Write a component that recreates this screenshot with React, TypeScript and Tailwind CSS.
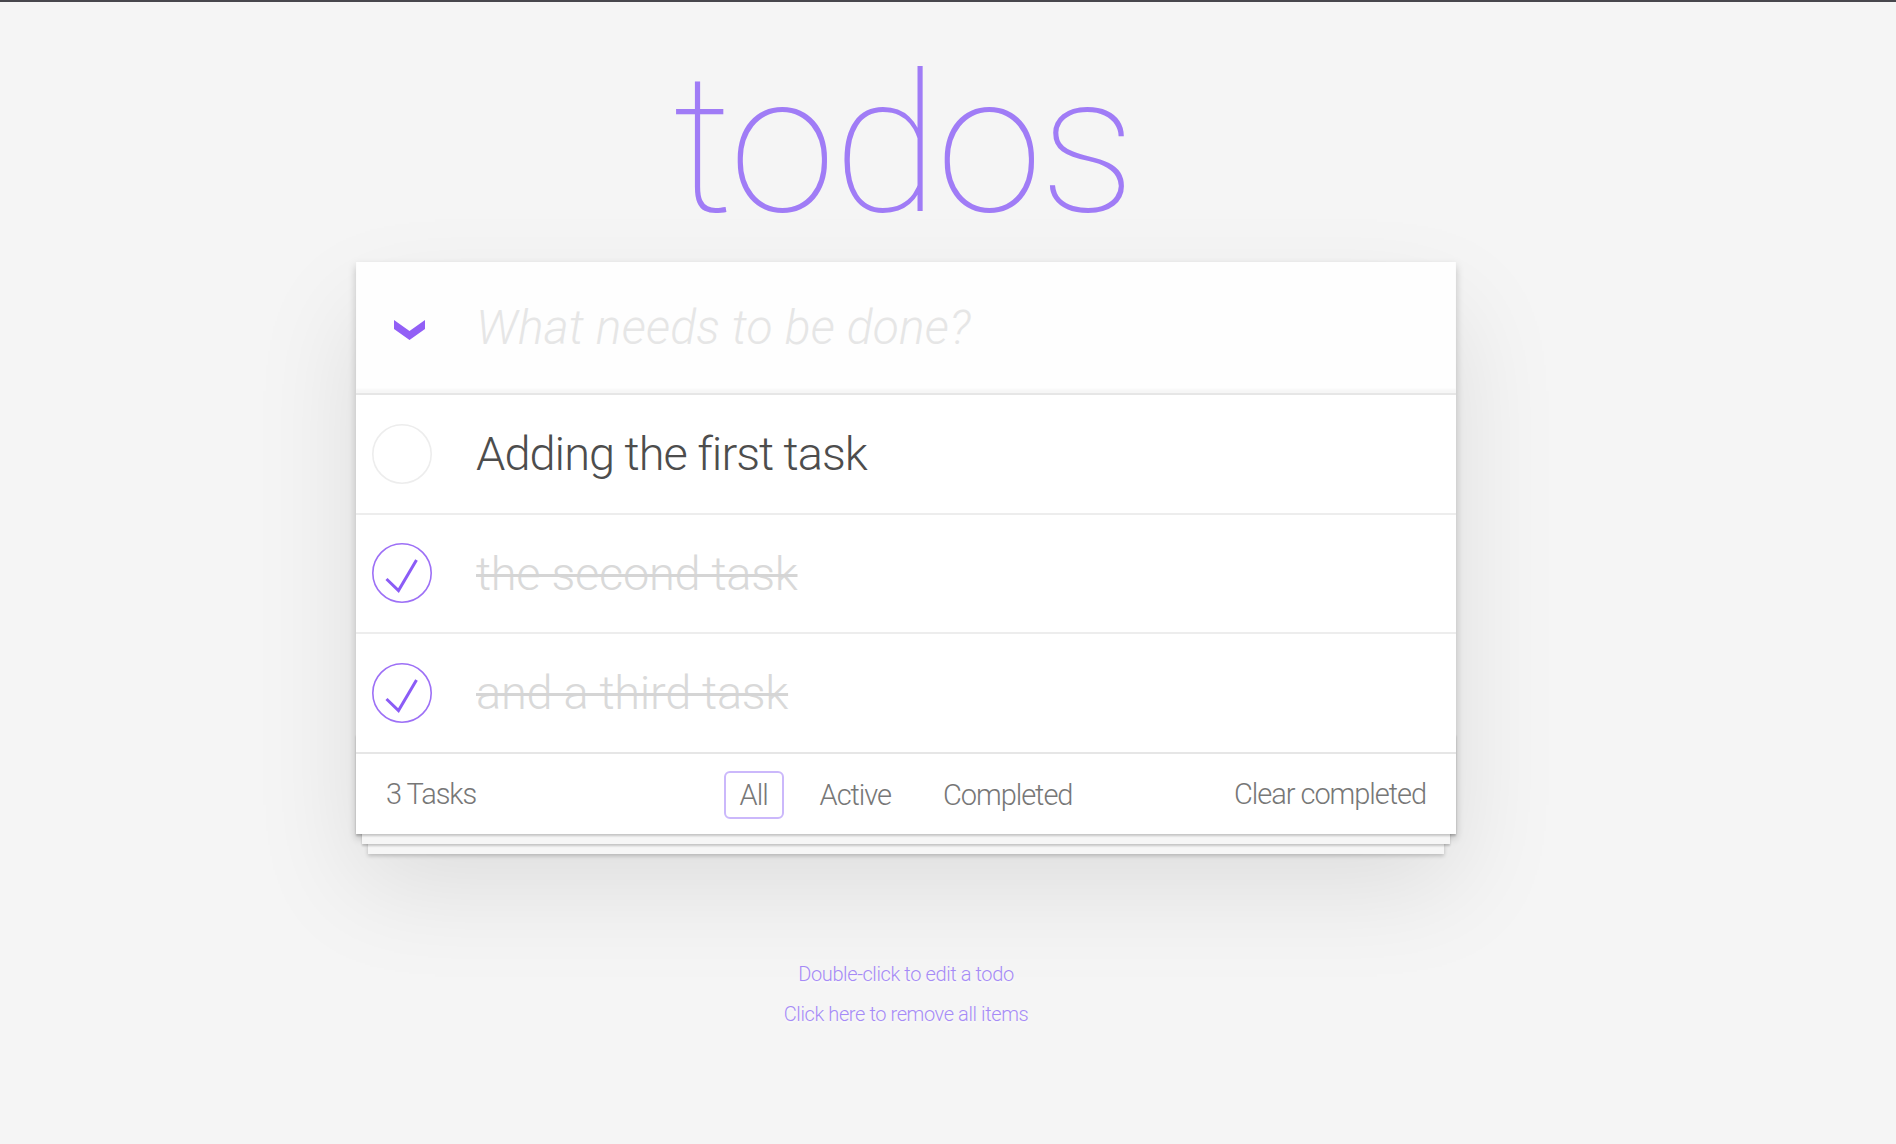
import React from "react";

const FONT = { fontFamily: "Roboto, 'Helvetica Neue', Arial, sans-serif" };

function Chevron() {
  return (
    <svg width="31" height="20" viewBox="0 0 31 20" className="block">
      <polygon points="0,0 15.5,11 31,0 31,9 15.5,20 0,9" fill="#925ff6" />
    </svg>
  );
}

function Toggle({ checked }: { checked: boolean }) {
  return (
    <svg width="60" height="60" viewBox="0 0 60 60" className="block shrink-0">
      <circle
        cx="30"
        cy="30"
        r="29.2"
        fill="none"
        stroke={checked ? "#9d70f6" : "#ededed"}
        strokeWidth="1.6"
      />
      {checked && (
        <polyline
          points="14.5,36 26.5,47.5 44.5,17"
          fill="none"
          stroke="#8b5cf6"
          strokeWidth="3"
          strokeLinejoin="miter"
        />
      )}
    </svg>
  );
}

function Row({ text, done, last }: { text: string; done: boolean; last?: boolean }) {
  return (
    <li className={`flex items-center bg-white ${last ? "" : "border-b-2 border-[#ededed]"}`}>
      <div className="ml-[16px] mr-[44px]">
        <Toggle checked={done} />
      </div>
      <span
        className={`py-[30px] leading-[57.6px] text-[47px] font-light ${
          done
            ? "tracking-[-0.3px] text-[#d9d9d9] line-through decoration-3 decoration-[#d5d5d5]"
            : "tracking-[-1px] text-[#4d4d4d]"
        }`}
      >
        {text}
      </span>
    </li>
  );
}

export default function App() {
  return (
    <div className="min-h-[1144px] bg-[#f5f5f5]" style={FONT}>
      <div className="h-[2px] bg-[#48474d]" />
      <div className="w-[1812px]">
        <div className="mx-auto w-[1100px] flex flex-col">
          <h1 className="mt-[47px] h-[193px] mb-[20px] pr-[6px] text-center text-[193px] leading-none font-thin tracking-[-2.5px] text-[#a07cf6]">
            todos
          </h1>

          <section className="relative bg-white shadow-[0_4px_8px_0_rgba(0,0,0,0.2),0_50px_100px_0_rgba(0,0,0,0.1)]">
            <header className="flex items-center h-[131px] bg-[rgba(0,0,0,0.003)] shadow-[inset_0_-4px_2px_rgba(0,0,0,0.03)]">
              <div className="ml-[38px] mr-[51px] mt-[5px]">
                <Chevron />
              </div>
              <span className="text-[48px] italic font-light leading-[67.2px] tracking-[0.2px] text-[#e6e6e6]">
                What needs to be done?
              </span>
            </header>

            <ul className="border-t-2 border-[#e6e6e6]">
              <Row text="Adding the first task" done={false} />
              <Row text="the second task" done={true} />
              <Row text="and a third task" done={true} last />
            </ul>

            <footer className="relative grid grid-cols-[1fr_auto_1fr] items-center h-[82px] px-[30px] pt-[2px] border-t-2 border-[#e6e6e6] text-[29px] font-light tracking-[-1.05px] text-[#777777]">
              <div className="absolute left-0 right-0 bottom-0 h-[100px] overflow-hidden pointer-events-none shadow-[0_2px_2px_rgba(0,0,0,0.2),0_16px_0_-6px_#f6f6f6,0_18px_2px_-6px_rgba(0,0,0,0.2),0_32px_0_-12px_#f6f6f6,0_34px_4px_-12px_rgba(0,0,0,0.2)]" />
              <span className="relative justify-self-start">3 Tasks</span>
              <ul className="relative flex items-center gap-[20px]">
                <li className="px-[14px] py-[6px] leading-[32px] border-2 border-[#cbb8fb] rounded-[6px]">All</li>
                <li className="px-[14px] py-[6px] leading-[32px] border-2 border-transparent rounded-[6px]">Active</li>
                <li className="px-[14px] py-[6px] leading-[32px] border-2 border-transparent rounded-[6px]">Completed</li>
              </ul>
              <span className="relative justify-self-end">Clear completed</span>
            </footer>
          </section>

          <div className="mt-[130px] flex flex-col gap-[20px] text-center text-[20px] leading-[20px] font-light tracking-[-0.4px] text-[#a68bf7] [text-shadow:0_2px_0_rgba(255,255,255,0.5)]">
            <p>Double-click to edit a todo</p>
            <p>Click here to remove all items</p>
          </div>
        </div>
      </div>
    </div>
  );
}
